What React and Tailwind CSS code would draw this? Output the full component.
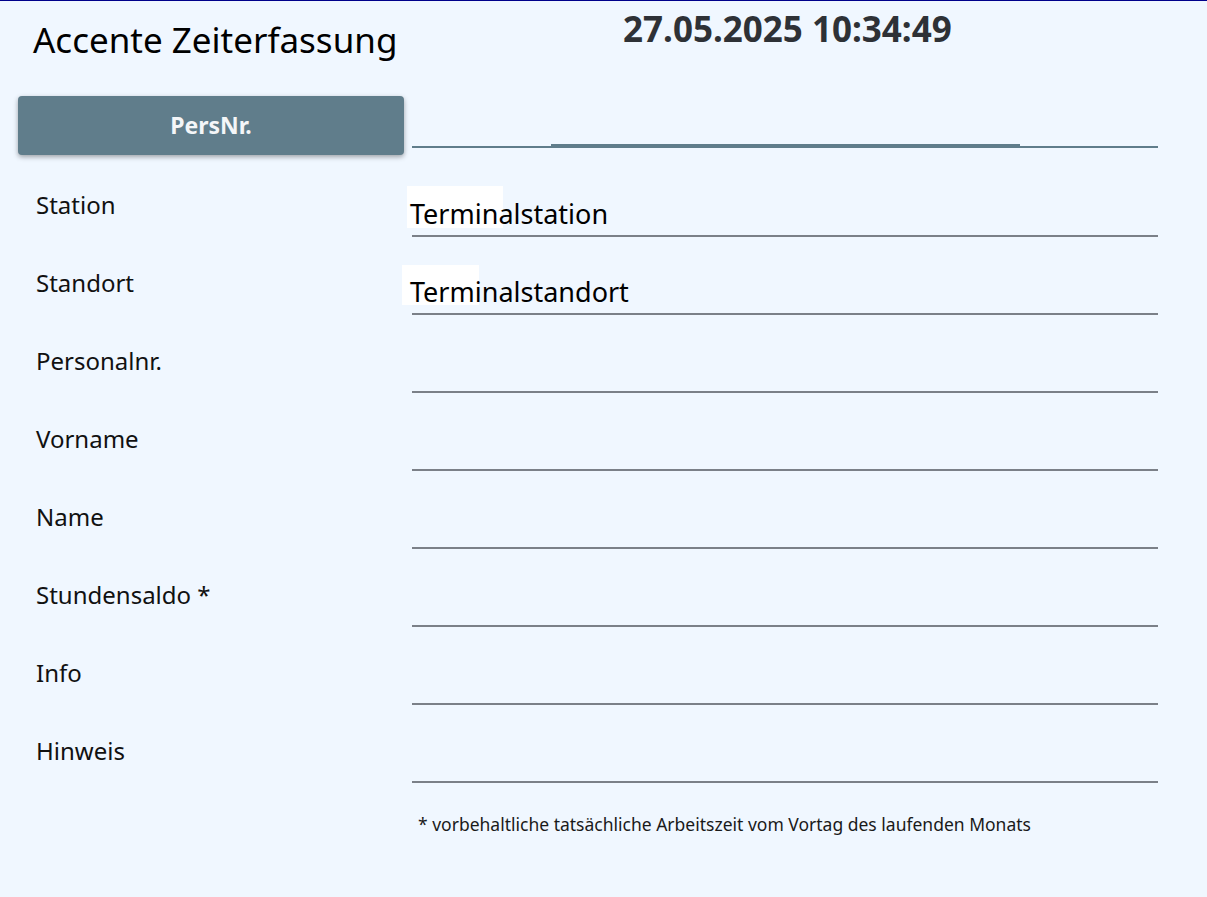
import React from 'react';

const rows = [
  { label: 'Standort', value: 'Terminalstandort', patch: 'left-[-10px] w-[77px] bottom-[8px] h-[40px]' },
  { label: 'Personalnr.' },
  { label: 'Vorname' },
  { label: 'Name' },
  { label: 'Stundensaldo *' },
  { label: 'Info' },
  { label: 'Hinweis' },
];

function FieldRow({ label, value, patch, tall }) {
  return (
    <div className={`flex ${tall ? 'h-[82px]' : 'h-[78px]'}`}>
      <div className="flex w-[412px] items-end pb-[16px] pl-[36px] text-[24px] leading-[32px] text-[#111]">
        {label}
      </div>
      <div className="relative flex w-[746px] items-end border-b-2 border-[#7b8088] pb-[3px]">
        {patch ? <div className={`absolute bg-white ${patch}`} /> : null}
        {value ? (
          <span className="relative ml-[-2px] text-[27px] leading-[36px] text-black">{value}</span>
        ) : null}
      </div>
    </div>
  );
}

export default function App() {
  return (
    <div
      className="min-h-[897px] border-t border-[#00008b] bg-[#f0f7ff]"
      style={{ fontFamily: '"Noto Sans", "Open Sans", sans-serif' }}
    >
      <div className="flex h-[95px] items-start">
        <h1 className="w-[623px] pl-[33px] pt-[18px] text-[35px] leading-[42px] font-normal text-black">
          Accente Zeiterfassung
        </h1>
        <div className="pt-[7px] text-[35px] leading-[42px] font-bold text-[#2e3136]">
          27.05.2025 10:34:49
        </div>
      </div>

      <div className="flex h-[59px] items-start">
        <div className="w-[412px] pl-[18px]">
          <button className="flex h-[59px] w-[386px] items-center justify-center rounded-[4px] bg-[#607d8b] text-[23px] font-bold text-[#f4f6f8] shadow-[0_2px_5px_rgba(0,0,0,0.35)]">
            PersNr.
          </button>
        </div>
        <div className="relative h-[52px] w-[746px] border-b-2 border-[#607d8b]">
          <div className="absolute bottom-[-1px] left-[139px] h-[3px] w-[469px] bg-[#607d8b]" />
        </div>
      </div>

      <FieldRow
        label="Station"
        value="Terminalstation"
        patch="left-[-5px] w-[96px] bottom-[7px] h-[42px]"
        tall
      />
      {rows.map((r) => (
        <FieldRow key={r.label} {...r} />
      ))}

      <p className="pl-[418px] pt-[29px] text-[17.5px] leading-[24px] text-[#1a1a1a]">
        * vorbehaltliche tatsächliche Arbeitszeit vom Vortag des laufenden Monats
      </p>
    </div>
  );
}
